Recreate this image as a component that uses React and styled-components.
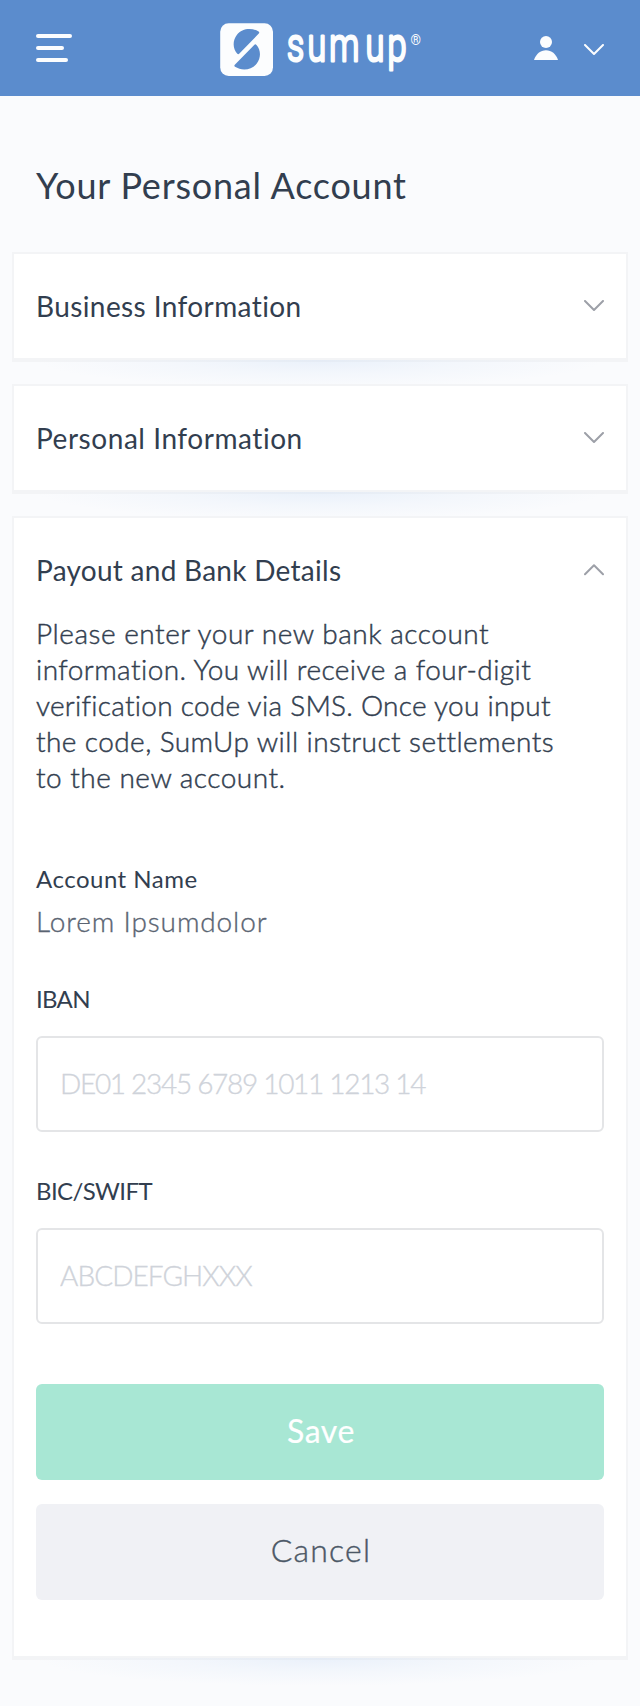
import React, { useState } from 'react';
import styled, { createGlobalStyle } from 'styled-components';

const GlobalStyle = createGlobalStyle`
  *, *::before, *::after { box-sizing: border-box; }
  body {
    margin: 0;
    background: #fafbfd;
    color: #323e4f;
    font-family: Lato, "Open Sans", sans-serif;
  }
  h1, h2, p { margin: 0; }
  button, input { font-family: inherit; }
`;

const Page = styled.div`
  min-height: 1706px;
  overflow: hidden;
`;

const Header = styled.header`
  display: grid;
  grid-template-columns: 1fr auto 1fr;
  align-items: center;
  height: 96px;
  padding: 0 36px;
  background: #5b8ccd;
`;

const IconButton = styled.button`
  display: flex;
  align-items: center;
  gap: 26px;
  padding: 0;
  border: 0;
  background: none;
  justify-self: ${({ $end }) => ($end ? 'end' : 'start')};
`;

const MenuBars = styled.span`
  display: flex;
  flex-direction: column;
  gap: 8px;
`;

const Bar = styled.span`
  width: ${({ $width }) => $width}px;
  height: 4px;
  border-radius: 2px;
  background: #fcfdfe;
`;

const Logo = styled.svg`
  display: block;
  margin-top: 3px;
`;

const Wordmark = styled.text`
  font-family: Roboto, sans-serif;
  font-size: 47px;
  font-weight: 300;
  letter-spacing: 4.5px;
  fill: #fcfdfe;
  stroke: #fcfdfe;
  stroke-width: 3px;
  stroke-linejoin: round;
`;

const Registered = styled.text`
  font-family: Roboto, sans-serif;
  font-size: 14px;
  fill: #fcfdfe;
`;

const Title = styled.h1`
  margin: 67px 36px 45px;
  font-size: 36px;
  font-weight: 400;
  line-height: 44px;
  letter-spacing: 0.77px;
`;

const CardList = styled.main`
  display: flex;
  flex-direction: column;
  gap: 22px;
  padding: 0 12px;
`;

const Card = styled.section`
  position: relative;
  border: 2px solid #f3f4f6;
  border-bottom-width: 4px;
  background: #fff;

  &::after {
    content: '';
    position: absolute;
    top: calc(100% + 2px);
    left: 22px;
    right: 22px;
    height: 28px;
    background: radial-gradient(ellipse 50% 100% at 50% 0, rgba(190, 213, 243, 0.27), rgba(190, 213, 243, 0.11) 50%, rgba(190, 213, 243, 0));
    pointer-events: none;
  }
`;

const CardHead = styled.div`
  display: flex;
  justify-content: space-between;
  align-items: flex-start;
  padding: 34px 22px ${({ $open }) => ($open ? 27 : 34)}px 22px;
`;

const CardTitle = styled.h2`
  font-size: 28px;
  font-weight: 400;
  line-height: 36px;
  letter-spacing: ${({ $tracking }) => $tracking}px;
`;

const ChevronIcon = styled.svg`
  display: block;
  margin-top: ${({ $top }) => $top}px;
`;

const CardBody = styled.div`
  padding: 0 22px 56px;
`;

const Intro = styled.p`
  font-size: 28px;
  font-weight: 300;
  line-height: 36px;
  -webkit-text-stroke: 0.45px currentColor;
`;

const Line = styled.span`
  display: block;
  white-space: nowrap;
  letter-spacing: ${({ $tracking }) => $tracking}px;
`;

const Label = styled.label`
  display: block;
  margin-top: ${({ $top }) => $top}px;
  font-size: 24px;
  line-height: 30px;
  letter-spacing: ${({ $tracking }) => $tracking}px;
`;

const Value = styled.p`
  margin-top: 9px;
  color: #5a6472;
  font-size: 28px;
  font-weight: 300;
  line-height: 36px;
  letter-spacing: 0.88px;
  -webkit-text-stroke: 0.35px currentColor;
`;

const Field = styled.input`
  display: block;
  width: 100%;
  height: 96px;
  margin-top: 22px;
  padding: 0 22px 2px;
  border: 2px solid #e4e5e7;
  border-radius: 6px;
  background: #fff;
  color: #323e4f;
  font-size: 28px;
  font-weight: 300;
  letter-spacing: ${({ $tracking }) => $tracking}px;
  -webkit-text-stroke: 0.35px currentColor;
  outline: none;

  &::placeholder {
    color: #cfd3da;
    opacity: 1;
  }
`;

const Button = styled.button`
  display: block;
  width: 100%;
  height: 96px;
  margin-top: ${({ $primary }) => ($primary ? 60 : 24)}px;
  padding: 0 0 ${({ $primary }) => ($primary ? 4 : 6)}px 2px;
  border: 0;
  border-radius: 6px;
  background: ${({ $primary }) => ($primary ? '#a8e7d4' : '#f0f1f5')};
  color: ${({ $primary }) => ($primary ? '#fff' : '#4c5866')};
  font-size: 32px;
  font-weight: ${({ $primary }) => ($primary ? 400 : 300)};
  letter-spacing: ${({ $primary }) => ($primary ? 0.6 : 1.2)}px;
  -webkit-text-stroke: ${({ $primary }) => ($primary ? 0.2 : 0.4)}px currentColor;
`;

function Chevron({ up, color = '#9da0a8', top = 12 }) {
  return (
    <ChevronIcon width="20" height="12" viewBox="0 0 20 12" fill="none" $top={top}>
      <path
        d={up ? 'M1 10.2 10 1.2l9 9' : 'M1 1l9 9 9-9'}
        stroke={color}
        strokeWidth="2"
        strokeLinecap="round"
        strokeLinejoin="round"
      />
    </ChevronIcon>
  );
}

function Panel({ title, tracking, open, children }) {
  return (
    <Card>
      <CardHead $open={open}>
        <CardTitle $tracking={tracking}>{title}</CardTitle>
        <Chevron up={open} />
      </CardHead>
      {open && <CardBody>{children}</CardBody>}
    </Card>
  );
}

const intro = [
  ['Please enter your new bank account', 0.53],
  ['information. You will receive a four-digit', 0.44],
  ['verification code via SMS. Once you input', 0.27],
  ['the code, SumUp will instruct settlements', 0.42],
  ['to the new account.', 0.5],
];

export default function App() {
  const [iban, setIban] = useState('');
  const [bic, setBic] = useState('');

  return (
    <Page>
      <GlobalStyle />
      <Header>
        <IconButton aria-label="Menu">
          <MenuBars>
            <Bar $width={36} />
            <Bar $width={28} />
            <Bar $width={32} />
          </MenuBars>
        </IconButton>
        <Logo width="202" height="74" viewBox="0 -10 202 74" role="img" aria-label="SumUp">
          <rect x="1.2" y="0.3" width="52.8" height="52.8" rx="8.5" fill="#fcfdfe" />
          <path
            d="M39.6 8.600C33 4.500 23 5 17.800 12c-4.500 6-4 13.500.3 18.500.8.900 1.500.9 2.300 0L39.800 10.600q1-1.200-.2-2Z"
            fill="#5b8ccd"
          />
          <path
            d="M16 43.800c6.600 4.100 16.600 3.600 21.800-3.400 4.500-6 4-13.500-.3-18.500-.8-.9-1.500-.9-2.300 0L15.800 41.800q-1 1.200.2 2Z"
            fill="#5b8ccd"
          />
          <Wordmark transform="translate(68 38) scale(.72 1)">sum</Wordmark>
          <Wordmark transform="translate(146.500 38) scale(.73 1)">up</Wordmark>
          <Registered transform="translate(191.500 22) scale(.95 1)">®</Registered>
        </Logo>
        <IconButton $end aria-label="Account">
          <svg width="24" height="24" viewBox="0 0 24 24" fill="#fcfdfe">
            <circle cx="12" cy="6" r="6" />
            <path d="M0 24C2 18 6.500 14.300 12 14.300S22 18 24 24Z" />
          </svg>
          <Chevron color="#fcfdfe" top={3} />
        </IconButton>
      </Header>

      <Title>Your Personal Account</Title>

      <CardList>
        <Panel title="Business Information" tracking={0.4} />
        <Panel title="Personal Information" tracking={0.55} />
        <Panel title="Payout and Bank Details" tracking={0.27} open>
          <Intro>
            {intro.map(([text, tracking]) => (
              <Line key={text} $tracking={tracking}>{text} </Line>
            ))}
          </Intro>
          <Label as="p" $top={69} $tracking={0.5}>Account Name</Label>
          <Value>Lorem Ipsumdolor</Value>
          <Label htmlFor="iban" $top={45} $tracking={-0.7}>IBAN</Label>
          <Field
            id="iban"
            value={iban}
            onChange={(e) => setIban(e.target.value)}
            placeholder="DE01 2345 6789 1011 1213 14"
            $tracking={-1.3}
          />
          <Label htmlFor="bic" $top={44} $tracking={-0.6}>BIC/SWIFT</Label>
          <Field
            id="bic"
            value={bic}
            onChange={(e) => setBic(e.target.value)}
            placeholder="ABCDEFGHXXX"
            $tracking={-0.95}
          />
          <Button $primary>Save</Button>
          <Button>Cancel</Button>
        </Panel>
      </CardList>
    </Page>
  );
}
